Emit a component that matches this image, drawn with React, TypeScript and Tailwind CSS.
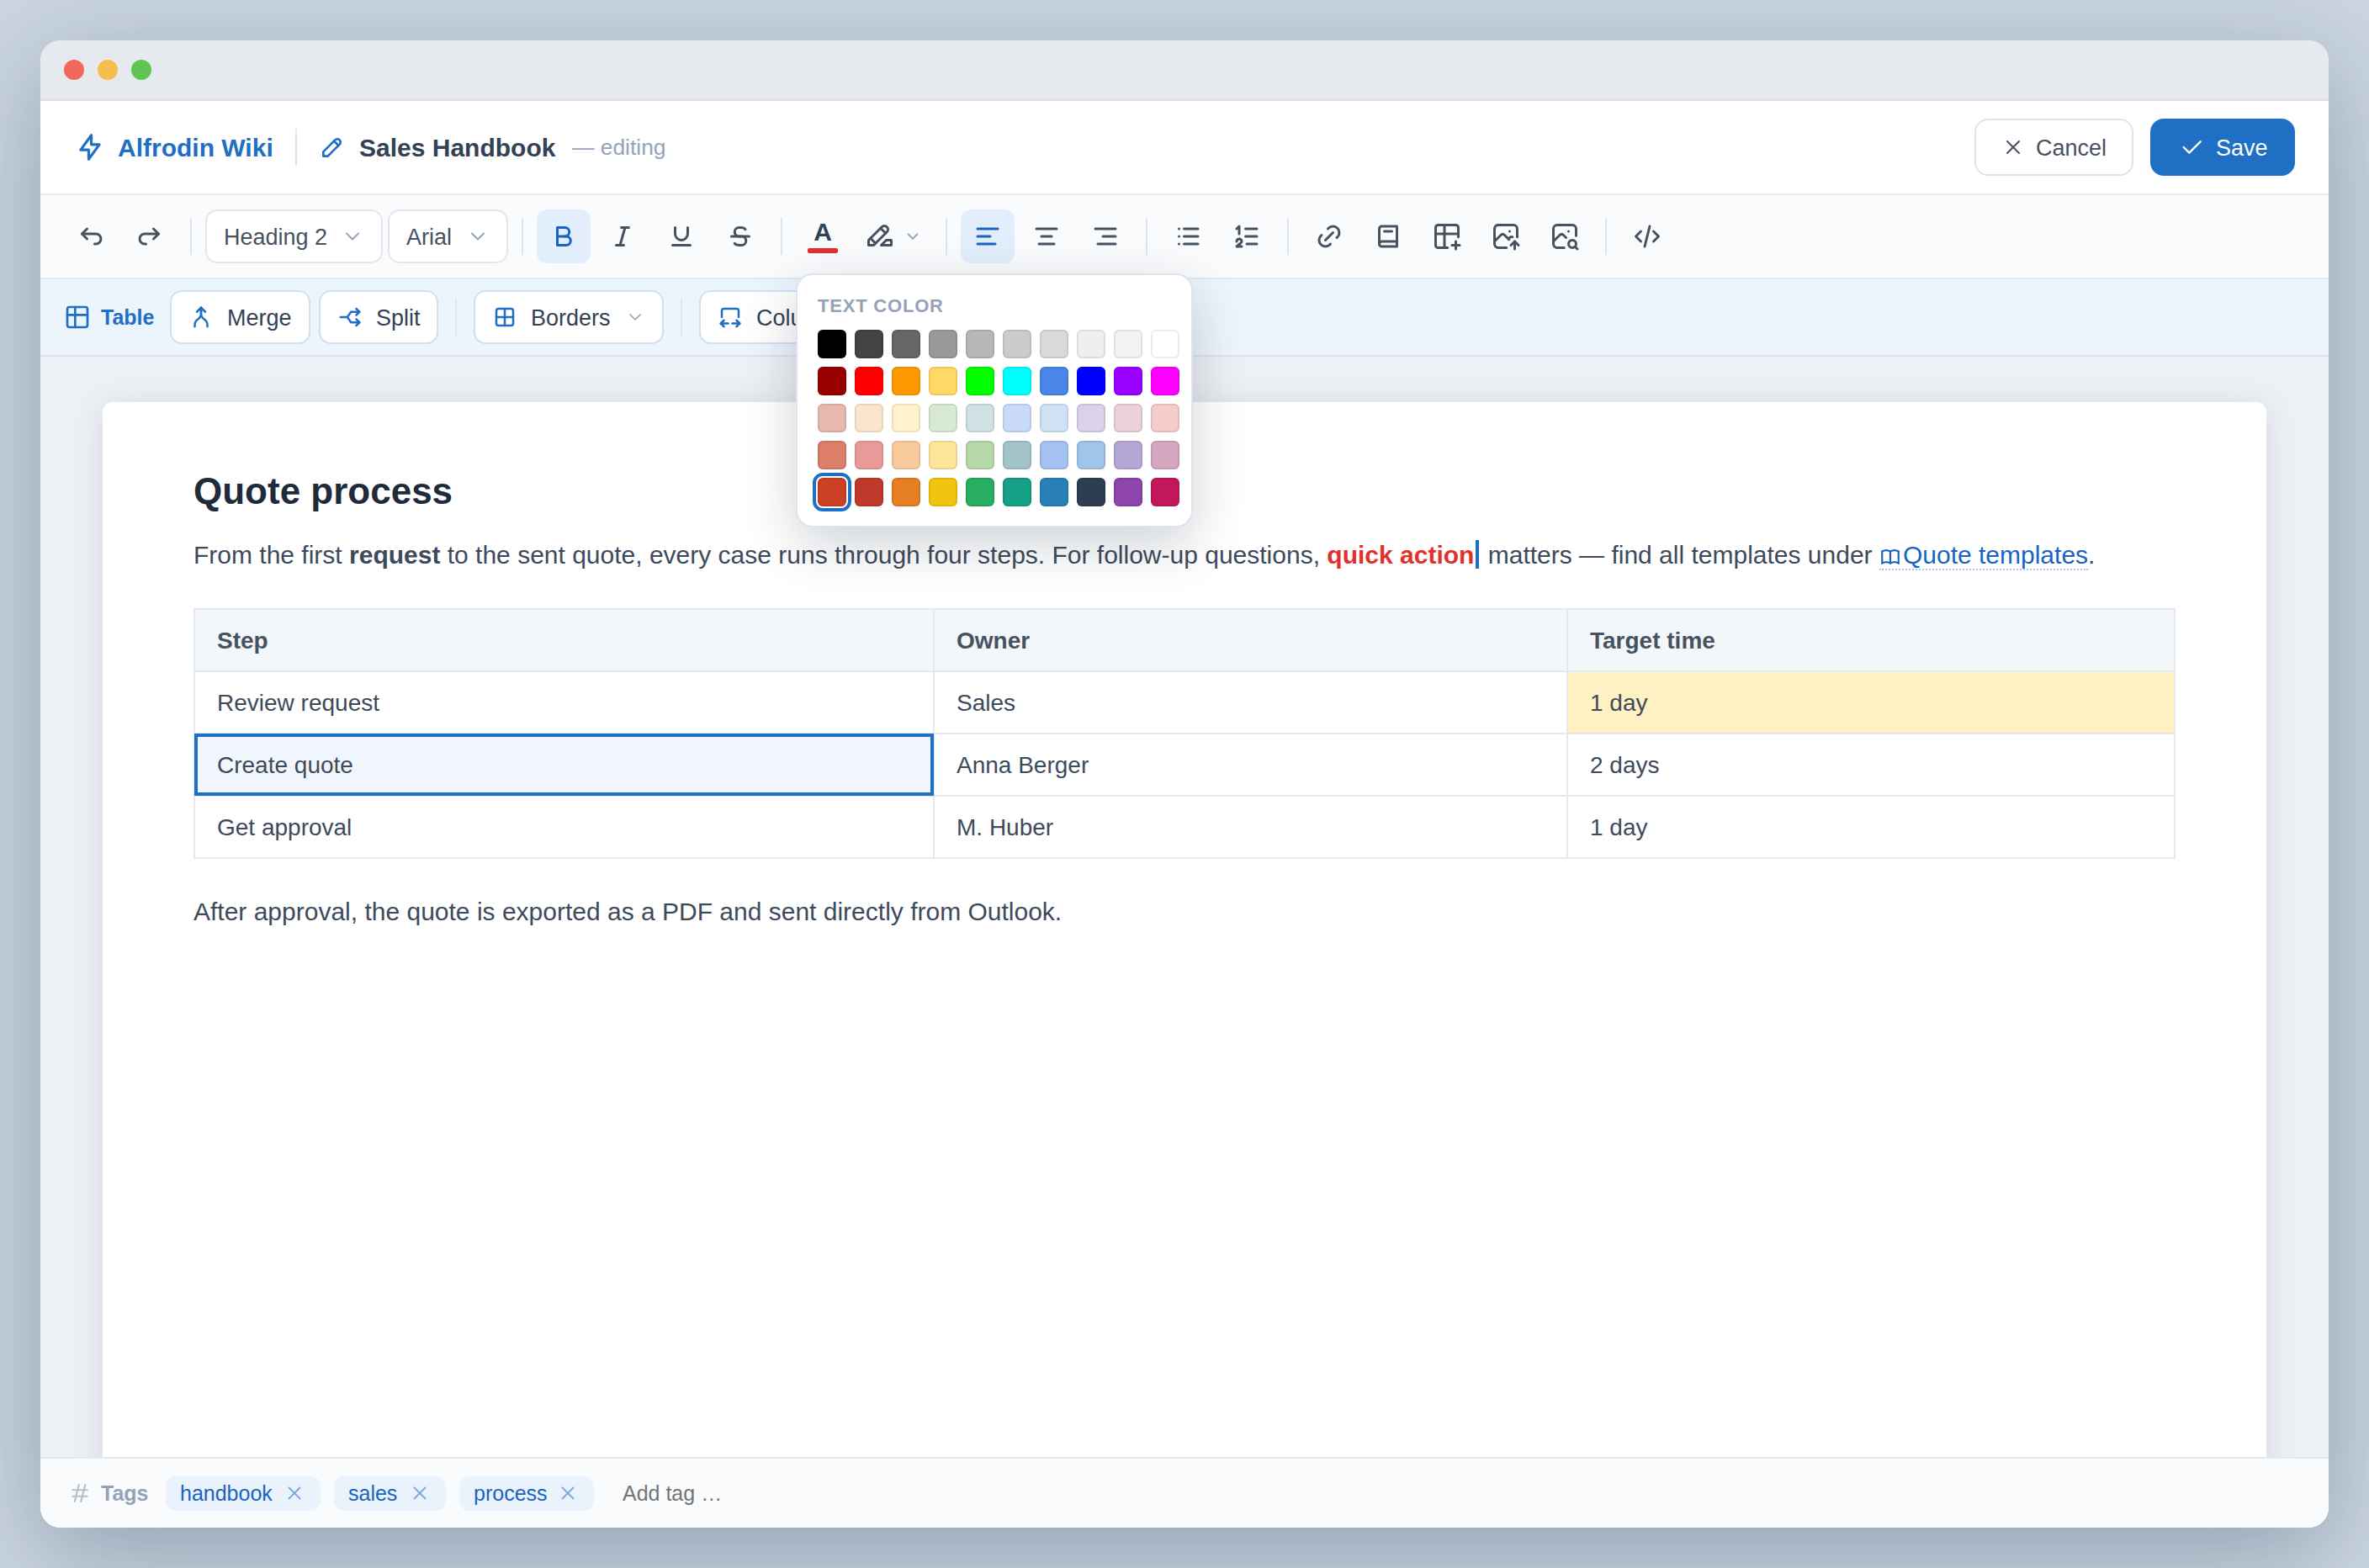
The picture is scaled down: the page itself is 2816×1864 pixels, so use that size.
import React from "react";
import type { ReactNode } from "react";
import type { IconType } from "react-icons";
import {
  TbAlignCenter,
  TbAlignLeft,
  TbAlignRight,
  TbArrowAutofitWidth,
  TbArrowBackUp,
  TbArrowForwardUp,
  TbArrowMerge,
  TbArrowsSplit,
  TbBold,
  TbBolt,
  TbBook,
  TbBook2,
  TbBorderAll,
  TbCheck,
  TbChevronDown,
  TbCode,
  TbHash,
  TbHighlight,
  TbItalic,
  TbLink,
  TbList,
  TbListNumbers,
  TbPencil,
  TbPhotoSearch,
  TbPhotoUp,
  TbStrikethrough,
  TbTable,
  TbTablePlus,
  TbUnderline,
  TbX,
} from "react-icons/tb";

const SWATCHES: string[] = [
  "#000000", "#434343", "#666666", "#999999", "#b7b7b7", "#cccccc", "#d9d9d9", "#efefef", "#f3f3f3", "#ffffff",
  "#980000", "#ff0000", "#ff9900", "#ffd966", "#00ff00", "#00ffff", "#4a86e8", "#0000ff", "#9900ff", "#ff00ff",
  "#e6b8af", "#fce5cd", "#fff2cc", "#d9ead3", "#d0e0e3", "#c9daf8", "#cfe2f3", "#d9d2e9", "#ead1dc", "#f4cccc",
  "#dd7e6b", "#ea9999", "#f9cb9c", "#ffe599", "#b6d7a8", "#a2c4c9", "#a4c2f4", "#9fc5e8", "#b4a7d6", "#d5a6bd",
  "#cc4125", "#c0392b", "#e67e22", "#f1c40f", "#27ae60", "#16a085", "#2980b9", "#2c3e50", "#8e44ad", "#c2185b",
];
const SELECTED = 40;

function Divider({ className = "mx-2.5" }: { className?: string }) {
  return <span className={`h-11 w-0.5 shrink-0 bg-[#dfe5ee] ${className}`} />;
}

function ToolButton({ icon: Icon, active = false }: { icon: IconType; active?: boolean }) {
  return (
    <button
      className={`flex size-16 shrink-0 items-center justify-center rounded-xl ${
        active ? "bg-[#e2eefb] text-[#1864c0]" : "text-[#475261]"
      }`}
    >
      <Icon size={36} />
    </button>
  );
}

function Select({ label, className }: { label: string; className: string }) {
  return (
    <button
      className={`flex h-16 shrink-0 items-center justify-between rounded-[14px] border-2 border-[#e2e7ef] bg-white px-5 text-[27px] text-[#475261] ${className}`}
    >
      <span className="pt-0.5">{label}</span>
      <TbChevronDown size={28} strokeWidth={1.75} className="text-[#94a3b8]" />
    </button>
  );
}

function TableButton({
  icon: Icon,
  label,
  className,
  dropdown = false,
}: {
  icon: IconType;
  label: string;
  className: string;
  dropdown?: boolean;
}) {
  return (
    <button
      className={`flex h-16 shrink-0 items-center rounded-[14px] border-2 border-[#cfe0f3] bg-white pl-5 text-[27px] text-[#334155] ${className}`}
    >
      <Icon size={30} className="mr-4 shrink-0 text-[#1f6fc4]" />
      <span className="pt-0.5">{label}</span>
      {dropdown && <TbChevronDown size={24} strokeWidth={1.75} className="mr-5 ml-auto text-[#94a3b8]" />}
    </button>
  );
}

function ColorPopup() {
  return (
    <div className="absolute top-[325px] left-[946px] z-10 h-[302px] w-[472px] rounded-[20px] border-2 border-[#dde4ee] bg-white px-6 pt-[21px] shadow-[0_20px_64px_rgba(15,23,42,0.2)]">
      <div className="mb-[13px] text-[22px] leading-[31px] font-bold tracking-[0.8px] text-[#94a3b8]">TEXT COLOR</div>
      <div className="grid w-[430px] grid-cols-10 gap-2.5">
        {SWATCHES.map((color, i) => (
          <span
            key={i}
            className={`size-[34px] rounded-md border-2 border-black/8 ${
              i === SELECTED ? "outline-4 outline-offset-2 outline-[#1f6fc4]" : ""
            }`}
            style={{ backgroundColor: color }}
          />
        ))}
      </div>
    </div>
  );
}

function Tag({ label, className }: { label: string; className: string }) {
  return (
    <span
      className={`mr-4 flex h-[41px] items-center justify-between rounded-xl bg-[#eaf2fc] pr-[18px] pl-[17px] text-[25px] text-[#1864c0] ${className}`}
    >
      <span className="pt-0.5">{label}</span>
      <TbX size={26} strokeWidth={1.75} className="text-[#7ba7dc]" />
    </span>
  );
}

function Cell({ children, className = "" }: { children: ReactNode; className?: string }) {
  return <td className={`h-[74px] border-2 border-[#e4e8f0] px-[26px] pt-0.5 pb-0 ${className}`}>{children}</td>;
}

export default function App() {
  return (
    <div className="relative h-[1864px] w-[2816px] overflow-hidden bg-[#cbd6e1] p-12 font-['Liberation_Sans',Arial,sans-serif] whitespace-nowrap text-[#3d4a5c]">
      <div className="flex h-full flex-col overflow-hidden rounded-[24px] bg-white shadow-[0_32px_120px_rgba(20,35,70,0.3)]">
        <div className="flex h-[72px] shrink-0 items-center gap-4 border-b-2 border-[#dce1e9] bg-[#e6e9ee] pl-7">
          <span className="size-6 rounded-full bg-[#f1695c]" />
          <span className="size-6 rounded-full bg-[#f4bd4f]" />
          <span className="size-6 rounded-full bg-[#61c554]" />
        </div>

        <header className="flex h-28 shrink-0 items-center border-b-2 border-[#e6eaf0] bg-white px-10">
          <TbBolt size={38} className="mr-3.5 text-[#1f6fc4]" />
          <span className="w-[185px] pt-px text-[30px] font-bold text-[#1f6fc4]">Alfrodin Wiki</span>
          <Divider className="mx-[26px]" />
          <TbPencil size={32} className="mr-4 text-[#1f6fc4]" />
          <span className="w-[253px] pt-px text-[30px] font-bold text-[#334155]">Sales Handbook</span>
          <span className="pt-0.5 text-[26.4px] text-[#94a3b8]">— editing</span>
          <div className="ml-auto flex items-center gap-5">
            <button className="flex h-[68px] w-[189px] items-center rounded-2xl border-2 border-[#dde4ee] pl-[30px] text-[27px] text-[#475261]">
              <TbX size={28} strokeWidth={1.75} className="mr-[13px]" />
              <span className="pt-0.5">Cancel</span>
            </button>
            <button className="flex h-[68px] w-[172px] items-center rounded-2xl bg-[#1f6fc4] pl-[33px] text-[27px] text-white">
              <TbCheck size={32} strokeWidth={1.75} className="mr-[13px]" />
              <span className="pt-0.5">Save</span>
            </button>
          </div>
        </header>

        <div className="flex h-[100px] shrink-0 items-center gap-1.5 border-b-2 border-[#e3e8f0] bg-[#fafbfd] pl-7">
          <ToolButton icon={TbArrowBackUp} />
          <ToolButton icon={TbArrowForwardUp} />
          <Divider />
          <Select label="Heading 2" className="w-[211px]" />
          <Select label="Arial" className="w-[143px]" />
          <Divider />
          <ToolButton icon={TbBold} active />
          <ToolButton icon={TbItalic} />
          <ToolButton icon={TbUnderline} />
          <ToolButton icon={TbStrikethrough} />
          <Divider />
          <button className="flex size-16 shrink-0 flex-col items-center pt-3 text-[30px] leading-[30px] font-bold text-[#334155]">
            A
            <span className="mt-1 h-1.5 w-9 rounded-[2px] bg-[#e0312d]" />
          </button>
          <button className="flex h-16 w-[92px] shrink-0 items-center justify-between px-3 text-[#475261]">
            <TbHighlight size={36} />
            <TbChevronDown size={22} className="text-[#94a3b8]" />
          </button>
          <Divider />
          <ToolButton icon={TbAlignLeft} active />
          <ToolButton icon={TbAlignCenter} />
          <ToolButton icon={TbAlignRight} />
          <Divider />
          <ToolButton icon={TbList} />
          <ToolButton icon={TbListNumbers} />
          <Divider />
          <ToolButton icon={TbLink} />
          <ToolButton icon={TbBook2} />
          <ToolButton icon={TbTablePlus} />
          <ToolButton icon={TbPhotoUp} />
          <ToolButton icon={TbPhotoSearch} />
          <Divider />
          <ToolButton icon={TbCode} />
        </div>

        <div className="flex h-[92px] shrink-0 items-center gap-2.5 border-b-2 border-[#dbe4ef] bg-[#ecf4fc] pl-7">
          <div className="flex w-[116px] items-center gap-3 text-[25px] font-bold text-[#1f6fc4]">
            <TbTable size={32} className="shrink-0" />
            <span className="pt-0.5">Table</span>
          </div>
          <TableButton icon={TbArrowMerge} label="Merge" className="w-[167px]" />
          <TableButton icon={TbArrowsSplit} label="Split" className="w-[142px]" />
          <Divider />
          <TableButton icon={TbBorderAll} label="Borders" className="w-[226px]" dropdown />
          <Divider />
          <TableButton icon={TbArrowAutofitWidth} label="Columns" className="w-[200px]" />
        </div>

        <main className="min-h-0 flex-1 overflow-hidden bg-[#edf0f5] px-[74px] pt-[54px]">
          <article className="h-[1400px] rounded-xl bg-white px-[108px] pt-20 shadow-[0_4px_40px_rgba(15,30,60,0.1)]">
            <h2 className="text-[44px] leading-[52px] font-bold text-[#1f2a3a]">Quote process</h2>
            <p className="mt-[25px] text-[30px] leading-[50px]">
              From the first <b>request</b> to the sent quote, every case runs through four steps. For follow-up
              questions, <b className="text-[#e0312d]">quick action</b>
              <span className="mr-[2px] ml-[2px] inline-block h-[34px] w-1 bg-[#1f6fc4] align-[-6px]" /> matters — find
              all templates under{" "}
              <a className="border-b-2 border-dotted border-[#a5c6ea] text-[#1864c0]">
                <TbBook size={26} className="mr-0.5 inline-block align-[-5px]" />
                Quote templates
              </a>
              .
            </p>
            <table className="mt-[38px] w-[2356px] table-fixed border-collapse text-[28px] leading-[40px]">
              <colgroup>
                <col className="w-[879px]" />
                <col className="w-[753px]" />
                <col className="w-[722px]" />
              </colgroup>
              <tbody>
                <tr className="bg-[#f3f7fa] font-bold text-[#475261]">
                  <Cell>Step</Cell>
                  <Cell>Owner</Cell>
                  <Cell>Target time</Cell>
                </tr>
                <tr>
                  <Cell>Review request</Cell>
                  <Cell>Sales</Cell>
                  <Cell className="bg-[#fef1c3]">1 day</Cell>
                </tr>
                <tr>
                  <Cell className="bg-[#f1f6fe] outline-4 -outline-offset-4 outline-[#1f6fc4]">Create quote</Cell>
                  <Cell>Anna Berger</Cell>
                  <Cell>2 days</Cell>
                </tr>
                <tr>
                  <Cell>Get approval</Cell>
                  <Cell>M. Huber</Cell>
                  <Cell>1 day</Cell>
                </tr>
              </tbody>
            </table>
            <p className="mt-[38px] text-[30px] leading-[50px]">
              After approval, the quote is exported as a PDF and sent directly from Outlook.
            </p>
          </article>
        </main>

        <footer className="z-0 flex h-[84px] shrink-0 items-center border-t-2 border-[#e4e9f0] bg-[#fafbfd] pl-8">
          <TbHash size={30} strokeWidth={1.75} className="mr-2.5 text-[#b4c0d0]" />
          <span className="w-[77px] pt-0.5 text-[25px] font-bold text-[#94a3b8]">Tags</span>
          <Tag label="handbook" className="w-[184px]" />
          <Tag label="sales" className="w-[133px]" />
          <Tag label="process" className="w-[160px]" />
          <span className="ml-[18px] pt-0.5 text-[25px] text-[#757575]">Add tag …</span>
        </footer>
      </div>
      <ColorPopup />
    </div>
  );
}
